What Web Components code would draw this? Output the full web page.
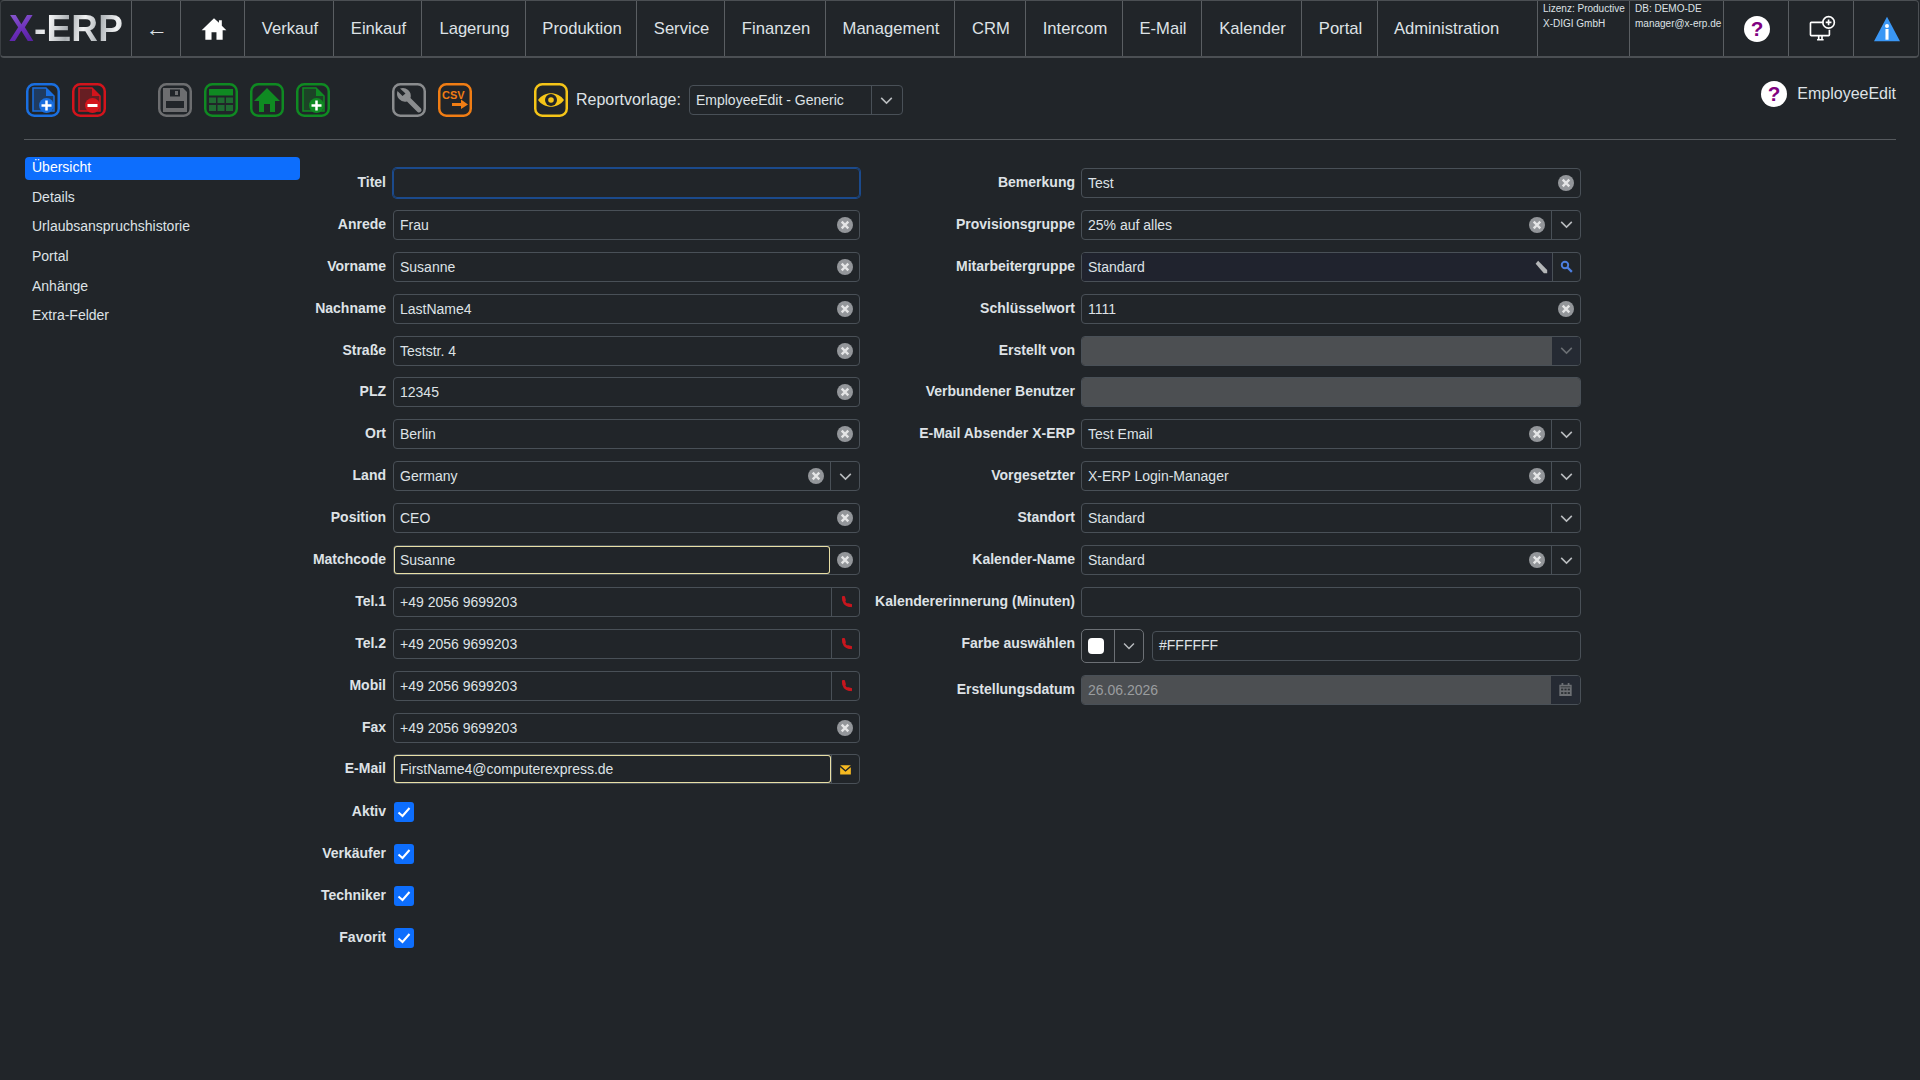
<!DOCTYPE html>
<html lang="de">
<head>
<meta charset="utf-8">
<title>EmployeeEdit</title>
<style>
  html, body { margin: 0; height: 100%; background: #212529; }
  body { font-family: "Liberation Sans", Arial, sans-serif; font-size: 14px; color: #dee2e6; overflow: hidden; }
</style>
</head>
<body>
<erp-page>
  <erp-navbar slot="nav">
    <erp-logo></erp-logo>
    <erp-nav-cell w="49"><span style="font-size:22px;line-height:22px">←</span></erp-nav-cell>
    <erp-nav-cell w="64"><erp-icon name="home" size="28"></erp-icon></erp-nav-cell>
    <erp-nav-cell w="89">Verkauf</erp-nav-cell>
    <erp-nav-cell w="88">Einkauf</erp-nav-cell>
    <erp-nav-cell w="104">Lagerung</erp-nav-cell>
    <erp-nav-cell w="111">Produktion</erp-nav-cell>
    <erp-nav-cell w="88">Service</erp-nav-cell>
    <erp-nav-cell w="101">Finanzen</erp-nav-cell>
    <erp-nav-cell w="129">Management</erp-nav-cell>
    <erp-nav-cell w="71">CRM</erp-nav-cell>
    <erp-nav-cell w="97">Intercom</erp-nav-cell>
    <erp-nav-cell w="79">E-Mail</erp-nav-cell>
    <erp-nav-cell w="100">Kalender</erp-nav-cell>
    <erp-nav-cell w="76">Portal</erp-nav-cell>
    <erp-nav-cell grow>Administration</erp-nav-cell>
    <erp-nav-info w="92" a="Lizenz: Productive" b="X-DIGI GmbH"></erp-nav-info>
    <erp-nav-info w="94" a="DB: DEMO-DE" b="manager@x-erp.de"></erp-nav-info>
    <erp-nav-cell w="65"><erp-icon name="help" size="26"></erp-icon></erp-nav-cell>
    <erp-nav-cell w="65"><erp-icon name="screen" size="28"></erp-icon></erp-nav-cell>
    <erp-nav-cell w="64" last><erp-icon name="info" size="26"></erp-icon></erp-nav-cell>
  </erp-navbar>

  <erp-toolbar slot="tools">
    <erp-tool name="docplus" color="#1a6fe0" style="margin-left:26px"></erp-tool>
    <erp-tool name="docminus" color="#d3141c"></erp-tool>
    <erp-tool name="save" color="#6d6e70" style="margin-left:40px"></erp-tool>
    <erp-tool name="table" color="#0f8a22"></erp-tool>
    <erp-tool name="house" color="#0f8a22"></erp-tool>
    <erp-tool name="docplus" color="#0f8a22"></erp-tool>
    <erp-tool name="wrench" color="#8a8c8e" style="margin-left:50px"></erp-tool>
    <erp-tool name="csv" color="#f07d14"></erp-tool>
    <erp-tool name="eye" color="#f5c518" style="margin-left:50px"></erp-tool>
    <erp-report-select label="Reportvorlage:" value="EmployeeEdit - Generic"></erp-report-select>
    <erp-page-title>EmployeeEdit</erp-page-title>
  </erp-toolbar>

  <erp-sidenav slot="side">
    <erp-side-item active>Übersicht</erp-side-item>
    <erp-side-item>Details</erp-side-item>
    <erp-side-item>Urlaubsanspruchshistorie</erp-side-item>
    <erp-side-item>Portal</erp-side-item>
    <erp-side-item>Anhänge</erp-side-item>
    <erp-side-item>Extra-Felder</erp-side-item>
  </erp-sidenav>

  <erp-form-col slot="left" lw="86" fw="467" gap="7">
    <erp-field label="Titel" state="focus"></erp-field>
    <erp-field label="Anrede" value="Frau" add="clear"></erp-field>
    <erp-field label="Vorname" value="Susanne" add="clear"></erp-field>
    <erp-field label="Nachname" value="LastName4" add="clear"></erp-field>
    <erp-field label="Straße" value="Teststr. 4" add="clear"></erp-field>
    <erp-field label="PLZ" value="12345" add="clear"></erp-field>
    <erp-field label="Ort" value="Berlin" add="clear"></erp-field>
    <erp-field label="Land" value="Germany" add="clear chevron"></erp-field>
    <erp-field label="Position" value="CEO" add="clear"></erp-field>
    <erp-field label="Matchcode" value="Susanne" add="clear" state="mark"></erp-field>
    <erp-field label="Tel.1" value="+49 2056 9699203" add="phone"></erp-field>
    <erp-field label="Tel.2" value="+49 2056 9699203" add="phone"></erp-field>
    <erp-field label="Mobil" value="+49 2056 9699203" add="phone"></erp-field>
    <erp-field label="Fax" value="+49 2056 9699203" add="clear"></erp-field>
    <erp-field label="E-Mail" value="FirstName4@computerexpress.de" add="mail" state="mark"></erp-field>
    <erp-check-field label="Aktiv"></erp-check-field>
    <erp-check-field label="Verkäufer"></erp-check-field>
    <erp-check-field label="Techniker"></erp-check-field>
    <erp-check-field label="Favorit"></erp-check-field>
  </erp-form-col>

  <erp-form-col slot="right" lw="215" fw="500" gap="6">
    <erp-field label="Bemerkung" value="Test" add="clear"></erp-field>
    <erp-field label="Provisionsgruppe" value="25% auf alles" add="clear chevron"></erp-field>
    <erp-field label="Mitarbeitergruppe" value="Standard" add="pencil search" tint></erp-field>
    <erp-field label="Schlüsselwort" value="1111" add="clear"></erp-field>
    <erp-field label="Erstellt von" add="chevron" disabled></erp-field>
    <erp-field label="Verbundener Benutzer" disabled></erp-field>
    <erp-field label="E-Mail Absender X-ERP" value="Test Email" add="clear chevron"></erp-field>
    <erp-field label="Vorgesetzter" value="X-ERP Login-Manager" add="clear chevron"></erp-field>
    <erp-field label="Standort" value="Standard" add="chevron"></erp-field>
    <erp-field label="Kalender-Name" value="Standard" add="clear chevron"></erp-field>
    <erp-field label="Kalendererinnerung (Minuten)"></erp-field>
    <erp-color-field label="Farbe auswählen" value="#FFFFFF"></erp-color-field>
    <erp-field label="Erstellungsdatum" value="26.06.2026" add="calendar" disabled></erp-field>
  </erp-form-col>
</erp-page>

<script>
// icons, all inline svg, viewBox 34x34
const ICONS = {
  home: '<path fill="#fff" d="M17 4 L23 9.5 V6.5 H26.5 V13 L32 18.5 H27.5 V30 H20 V21 H14 V30 H6.5 V18.5 H2 Z"/>',
  help: '<circle cx="17" cy="17" r="17" fill="#fff"/><text x="17" y="26.5" text-anchor="middle" font-family="Liberation Sans, sans-serif" font-weight="700" font-size="27" fill="#800080">?</text>',
  screen: '<g fill="none" stroke="#fff" stroke-width="2"><path d="M19 9 H4 a1 1 0 0 0 -1 1 V24 a1 1 0 0 0 1 1 H25 a1 1 0 0 0 1 -1 V18"/><path d="M11 30 H19 M13 25 V30 M17 25 V30"/><circle cx="25" cy="9" r="7"/><path d="M25 5.5 V12.5 M21.5 9 H28.5"/></g>',
  info: '<path fill="#3a97f5" d="M17 1 L34 33 H0 Z"/><circle cx="17" cy="13" r="2.6" fill="#fff"/><rect x="15" y="17" width="4" height="14" fill="#fff"/>',
  clear: '<circle cx="17" cy="17" r="17" fill="#93969a"/><path d="M10 10 L24 24 M24 10 L10 24" stroke="#e4e5e6" stroke-width="5"/>',
  chevron: '<path d="M5 11 L17 23 L29 11" fill="none" stroke="#b9bcbf" stroke-width="3.5"/>',
  chevdim: '<path d="M5 11 L17 23 L29 11" fill="none" stroke="#6a6e73" stroke-width="3.5"/>',
  phone: '<g fill="none" stroke="#c7161e" stroke-linecap="round"><path d="M10 7 C9 18 16 26 27 27" stroke-width="8"/><path d="M10 4 L12 12 M23 25 L31 27" stroke-width="9"/></g>',
  mail: '<path fill="#f5b921" d="M3 6 H31 L17 18 Z M3 11 L17 23 L31 11 V30 H3 Z"/>',
  pencil: '<path fill="#b4b6b8" d="M4 9 L10 2 L32 24 V32 H24 Z"/>',
  search: '<g fill="none" stroke="#4d7fe0"><circle cx="13" cy="13" r="8.5" stroke-width="5"/><path d="M19 19 L31 31" stroke-width="6"/></g>',
  calendar: '<path fill="#6d7074" d="M8 2 H12 V6 H22 V2 H26 V6 H31 V32 H3 V6 H8 Z"/><g fill="#2a2e32"><rect x="6" y="10" width="22" height="2"/><rect x="7" y="15" width="5" height="4"/><rect x="14.500" y="15" width="5" height="4"/><rect x="22" y="15" width="5" height="4"/><rect x="7" y="23" width="5" height="4"/><rect x="14.500" y="23" width="5" height="4"/><rect x="22" y="23" width="5" height="4"/></g>'
};

// toolbar glyphs, c is the button colour
const doc = (c, a) => `<path d="M7 5 H20 L28 13 V28 H7 Z" fill="${c}" fill-opacity="${a}" stroke="${c}" stroke-width="1.5"/><path d="M20 5 L28 13 H20 Z" fill="${c}"/><circle cx="20.500" cy="22.500" r="7.500" fill="${c}"/>`
const TOOL = {
  docplus: c => doc(c, '.3') + `<path d="M20.500 17.500 V27.500 M15.500 22.500 H25.500" stroke="#fff" stroke-width="2.500"/>`,
  docminus: c => doc(c, '.4') + `<path d="M15.500 22.500 H25.500" stroke="#fff" stroke-width="3"/>`,
  save: c => `<path d="M5 5 H25 L29 9 V29 H5 Z" fill="${c}"/><rect x="12" y="6.500" width="10" height="7" fill="#212529"/><rect x="17" y="8" width="3" height="4" fill="${c}"/><rect x="8" y="18" width="18" height="7" fill="#212529"/>`,
  table: c => `<rect x="5" y="6" width="24" height="6.500" fill="${c}"/><g fill="#1f6a32"><rect x="5" y="14.500" width="7" height="5.500"/><rect x="13.500" y="14.500" width="7" height="5.500"/><rect x="22" y="14.500" width="7" height="5.500"/><rect x="5" y="22" width="7" height="6"/><rect x="13.500" y="22" width="7" height="6"/><rect x="22" y="22" width="7" height="6"/></g>`,
  house: c => `<path d="M17 5 L30 18 H25 V29 H20 V21 H14 V29 H9 V18 H4 Z" fill="${c}"/>`,
  wrench: c => `<path d="M8 5.500 A8 8 0 0 1 18.500 15 L29 25.500 A2.500 2.500 0 0 1 25.500 29 L15 18.500 A8 8 0 0 1 5.500 8 L10.500 13 L13.500 10.500 Z" fill="${c}"/>`,
  csv: c => `<text x="4" y="16" font-family="Liberation Sans, sans-serif" font-weight="700" font-size="11" fill="${c}">CSV</text><path d="M14 20 H23 V16.500 L30 21.500 L23 26 V23 H14 Z" fill="${c}"/>`,
  eye: c => `<path d="M4 17 C10 8 24 8 30 17 C24 26 10 26 4 17 Z" fill="${c}"/><circle cx="17" cy="17" r="6" fill="#212529"/><circle cx="17" cy="17" r="2.800" fill="${c}"/>`
};

class ErpPage extends HTMLElement {
  constructor() {
    super()
    this.attachShadow({ mode: 'open' }).innerHTML = `
      <style>
        :host { display: block; width: 1920px; height: 1080px; }
        main { display: flex; align-items: flex-start; }
        .side { width: 275px; margin-left: 25px; padding-top: 17px; flex: none; }
        .col { padding-top: 28px; flex: none; }
      </style>
      <slot name="nav"></slot>
      <slot name="tools"></slot>
      <main>
        <div class="side"><slot name="side"></slot></div>
        <div class="col"><slot name="left"></slot></div>
        <div class="col"><slot name="right"></slot></div>
      </main>`
  }
}

class ErpNavbar extends HTMLElement {
  constructor() {
    super()
    this.attachShadow({ mode: 'open' }).innerHTML = `
      <style>
        :host { display: flex; box-sizing: border-box; height: 58px; width: 1919px;
                border: 1px solid #4b4f53; border-bottom-width: 2px; border-left-color: #3a3e42; border-radius: 4px; }
      </style><slot></slot>`
  }
}

class ErpLogo extends HTMLElement {
  constructor() {
    super()
    this.attachShadow({ mode: 'open' }).innerHTML = `
      <style>
        :host { display: flex; align-items: center; box-sizing: border-box; width: 131px; flex: none; padding-left: 8px;
                border-right: 1px solid #5a5e62; }
        span { font: 700 37px/1 "Liberation Sans", sans-serif; letter-spacing: .2px; display: block;
               -webkit-background-clip: text; background-clip: text; color: transparent; }
        .x { background-image: linear-gradient(160deg, #8f63d4, #6a2cb8 55%, #4d1e96); }
        .rest { background-image: linear-gradient(100deg, #c6cacd 0%, #f2f3f4 18%, #a8adb1 38%, #f0f1f2 55%, #aeb3b7 72%, #f2f3f4 90%, #c4c8cb 100%); }
      </style><span class="x">X</span><span class="rest">-ERP</span>`
  }
}

class ErpNavCell extends HTMLElement {
  constructor() {
    super()
    this.attachShadow({ mode: 'open' }).innerHTML = `
      <style>
        :host { display: flex; align-items: center; justify-content: center; box-sizing: border-box; flex: none;
                padding: 0 16px; font-size: 16.600px; color: #dee2e6; border-right: 1px solid #5a5e62; white-space: nowrap; }
        :host([w]) { padding: 0 0 0 2px; }
        :host([grow]) { flex: 1; justify-content: flex-start; }
        :host([last]) { border-right: 0; }
      </style><slot></slot>`
  }
  connectedCallback() {
    if (this.hasAttribute('w')) this.style.width = this.getAttribute('w') + 'px'
  }
}

class ErpNavInfo extends HTMLElement {
  constructor() {
    super()
    this.attachShadow({ mode: 'open' })
  }
  connectedCallback() {
    this.shadowRoot.innerHTML = `
      <style>
        :host { display: block; box-sizing: border-box; flex: none; padding: 0 0 0 5px; font-size: 10px; line-height: 15px;
                color: #dee2e6; border-right: 1px solid #5a5e62; white-space: nowrap; width: ${this.getAttribute('w')}px; }
      </style><div>${this.getAttribute('a')}</div><div>${this.getAttribute('b')}</div>`
  }
}

class ErpIcon extends HTMLElement {
  constructor() {
    super()
    this.attachShadow({ mode: 'open' })
  }
  connectedCallback() {
    const s = this.getAttribute('size') || 16
    this.shadowRoot.innerHTML = `
      <style>:host { display: inline-flex; flex: none; width: ${s}px; height: ${s}px; } svg { display: block; }</style>
      <svg viewBox="0 0 34 34" width="${s}" height="${s}">${ICONS[this.getAttribute('name')]}</svg>`
  }
}

class ErpToolbar extends HTMLElement {
  constructor() {
    super()
    this.attachShadow({ mode: 'open' }).innerHTML = `
      <style>
        :host { display: block; height: 82px; box-sizing: border-box; padding-top: 25px; position: relative; }
        .row { display: flex; align-items: flex-start; gap: 12px; height: 56px; }
        hr { position: absolute; left: 24px; right: 24px; bottom: 0; margin: 0; border: 0; border-top: 1px solid #55595d; }
      </style>
      <div class="row"><slot></slot></div><hr>`
  }
}

class ErpTool extends HTMLElement {
  constructor() {
    super()
    this.attachShadow({ mode: 'open' })
  }
  connectedCallback() {
    const c = this.getAttribute('color')
    this.shadowRoot.innerHTML = `
      <style>:host { display: block; flex: none; width: 34px; height: 34px; } svg { display: block; }</style>
      <svg viewBox="0 0 34 34" width="34" height="34">
        <rect x="1.250" y="1.250" width="31.500" height="31.500" rx="7" fill="none" stroke="${c}" stroke-width="2.500"/>
        ${TOOL[this.getAttribute('name')](c)}
      </svg>`
  }
}

class ErpReportSelect extends HTMLElement {
  constructor() {
    super()
    this.attachShadow({ mode: 'open' })
  }
  connectedCallback() {
    this.shadowRoot.innerHTML = `
      <style>
        :host { display: flex; align-items: center; height: 34px; margin-left: -4px; font-size: 16px; color: #dee2e6; }
        .box { display: flex; align-items: center; box-sizing: border-box; width: 214px; height: 30px; margin-left: 8px;
               border: 1px solid #495057; border-radius: 4px; font-size: 14px; }
        .v { flex: 1; padding-left: 6px; }
        .a { width: 30px; height: 100%; border-left: 1px solid #495057; display: flex; align-items: center; justify-content: center; }
      </style>
      <span>${this.getAttribute('label')}</span>
      <div class="box"><div class="v">${this.getAttribute('value')}</div><div class="a"><erp-icon name="chevron" size="15"></erp-icon></div></div>`
  }
}

class ErpPageTitle extends HTMLElement {
  constructor() {
    super()
    this.attachShadow({ mode: 'open' }).innerHTML = `
      <style>
        :host { display: flex; align-items: center; gap: 10px; height: 26px; margin: -2px 24px 0 auto;
                font-size: 16px; color: #dee2e6; }
      </style><erp-icon name="help" size="26"></erp-icon><slot></slot>`
  }
}

class ErpSidenav extends HTMLElement {
  constructor() {
    super()
    this.attachShadow({ mode: 'open' }).innerHTML = `
      <style>:host { display: flex; flex-direction: column; gap: 6.700px; }</style><slot></slot>`
  }
}

class ErpSideItem extends HTMLElement {
  constructor() {
    super()
    this.attachShadow({ mode: 'open' }).innerHTML = `
      <style>
        :host { display: block; height: 23px; line-height: 20px; padding-left: 7px; border-radius: 4px; color: #dee2e6; font-size: 14px; }
        :host([active]) { background: #0d6efd; color: #fff; }
      </style><slot></slot>`
  }
}

class ErpFormCol extends HTMLElement {
  constructor() {
    super()
    this.attachShadow({ mode: 'open' })
  }
  connectedCallback() {
    // column widths are passed down with custom properties
    this.shadowRoot.innerHTML = `
      <style>
        :host { display: block; --lw: ${this.getAttribute('lw')}px; --fw: ${this.getAttribute('fw')}px; --gap: ${this.getAttribute('gap')}px; }
      </style><slot></slot>`
  }
}

const ROW_CSS = `
  :host { display: grid; grid-template-columns: var(--lw) var(--fw); column-gap: var(--gap); height: 41.900px; align-items: start; }
  label { font-weight: 700; font-size: 14px; text-align: right; white-space: nowrap; line-height: 29px; color: #dee2e6; direction: rtl; unicode-bidi: plaintext; }
`

class ErpField extends HTMLElement {
  constructor() {
    super()
    this.attachShadow({ mode: 'open' })
  }
  connectedCallback() {
    const add = (this.getAttribute('add') || '').split(' ').filter(Boolean)
    const state = this.getAttribute('state') || ''
    const off = this.hasAttribute('disabled')
    let inner = ''
    let addon = ''
    for (const a of add) {
      if (a === 'clear') inner += '<erp-icon class="clear" name="clear" size="16"></erp-icon>'
      if (a === 'pencil') inner += '<erp-icon class="pen" name="pencil" size="14"></erp-icon>'
      if (a === 'chevron') addon += `<div class="add w28"><erp-icon name="${off ? 'chevdim' : 'chevron'}" size="15"></erp-icon></div>`
      if (a === 'phone') addon += '<div class="add w27"><erp-icon name="phone" size="12"></erp-icon></div>'
      if (a === 'mail') addon += '<div class="add w27"><erp-icon name="mail" size="13"></erp-icon></div>'
      if (a === 'search') addon += '<div class="add w27"><erp-icon name="search" size="13"></erp-icon></div>'
      if (a === 'calendar') addon += '<div class="add w29"><erp-icon name="calendar" size="15"></erp-icon></div>'
    }
    this.shadowRoot.innerHTML = `
      <style>
        ${ROW_CSS}
        .ctl { display: flex; box-sizing: border-box; height: 30px; border: 1px solid #495057; border-radius: 4px; }
        .inp { flex: 1; min-width: 0; display: flex; align-items: center; padding: 0 6px; font-size: 14px; color: #dee2e6; border-radius: 3px; }
        .val { flex: 1; white-space: nowrap; }
        .pen { margin-right: -2px; }
        .add { flex: none; display: flex; align-items: center; justify-content: center; border-left: 1px solid #495057; }
        .w27 { width: 27px; } .w28 { width: 28px; } .w29 { width: 29px; }
        .focus { border-color: #1b4a8c; box-shadow: 0 0 0 1px #1b4a8c; }
        .mark .inp { box-shadow: inset 0 0 0 1px #e8dfa6; }
        .mark.clr { position: relative; padding-right: 29px; }
        .mark.clr .clear { position: absolute; right: 6px; }
        .off .inp { background: #4c4f52; color: #9a9d9f; border-radius: 3px 0 0 3px; }
        .off .add { background: #252a33; border-left: 0; border-radius: 0 3px 3px 0; }
        .tint .inp { background: #20232e; }
        .off.noadd .inp { border-radius: 3px; }
      </style>
      <label>${this.getAttribute('label')}</label>
      <div class="ctl ${state} ${off ? 'off' : ''} ${add.length ? '' : 'noadd'} ${this.hasAttribute('tint') ? 'tint' : ''} ${state === 'mark' && add[0] === 'clear' ? 'clr' : ''}">
        <div class="inp"><span class="val">${this.getAttribute('value') || ''}</span>${inner}</div>${addon}
      </div>`
  }
}

class ErpCheckField extends HTMLElement {
  constructor() {
    super()
    this.attachShadow({ mode: 'open' })
  }
  connectedCallback() {
    this.shadowRoot.innerHTML = `
      <style>
        ${ROW_CSS}
        label { line-height: 30px; }
        .box { width: 20px; height: 20px; margin: 6px 0 0 1px; border-radius: 3px; background: #0d6efd; display: flex; align-items: center; justify-content: center; }
      </style>
      <label>${this.getAttribute('label')}</label>
      <div class="box"><svg viewBox="0 0 20 20" width="20" height="20"><path d="M4.500 10.500 L8.500 14 L15.500 6" fill="none" stroke="#fff" stroke-width="2"/></svg></div>`
  }
}

class ErpColorField extends HTMLElement {
  constructor() {
    super()
    this.attachShadow({ mode: 'open' })
  }
  connectedCallback() {
    this.shadowRoot.innerHTML = `
      <style>
        ${ROW_CSS}
        :host { height: 46px; }
        label { line-height: 28px; }
        .w { display: flex; gap: 8px; align-items: flex-start; }
        .pick { display: flex; box-sizing: border-box; width: 63px; height: 34px; border: 1px solid #6c7075; border-radius: 5px; flex: none; }
        .sw { width: 33px; box-sizing: border-box; padding-left: 6px; display: flex; align-items: center; border-right: 1px solid #6c7075; }
        .sw i { display: block; width: 16px; height: 16px; background: #fff; border-radius: 4px; }
        .ch { flex: 1; display: flex; align-items: center; justify-content: center; }
        .txt { flex: 1; box-sizing: border-box; height: 30px; margin-top: 2px; line-height: 27px; padding-left: 6px; border: 1px solid #495057; border-radius: 4px; font-size: 14px; color: #dee2e6; }
      </style>
      <label>${this.getAttribute('label')}</label>
      <div class="w">
        <div class="pick"><div class="sw"><i></i></div><div class="ch"><erp-icon name="chevron" size="14"></erp-icon></div></div>
        <div class="txt">${this.getAttribute('value')}</div>
      </div>`
  }
}

customElements.define('erp-page', ErpPage)
customElements.define('erp-navbar', ErpNavbar)
customElements.define('erp-logo', ErpLogo)
customElements.define('erp-nav-cell', ErpNavCell)
customElements.define('erp-nav-info', ErpNavInfo)
customElements.define('erp-icon', ErpIcon)
customElements.define('erp-toolbar', ErpToolbar)
customElements.define('erp-tool', ErpTool)
customElements.define('erp-report-select', ErpReportSelect)
customElements.define('erp-page-title', ErpPageTitle)
customElements.define('erp-sidenav', ErpSidenav)
customElements.define('erp-side-item', ErpSideItem)
customElements.define('erp-form-col', ErpFormCol)
customElements.define('erp-field', ErpField)
customElements.define('erp-check-field', ErpCheckField)
customElements.define('erp-color-field', ErpColorField)
</script>
</body>
</html>
